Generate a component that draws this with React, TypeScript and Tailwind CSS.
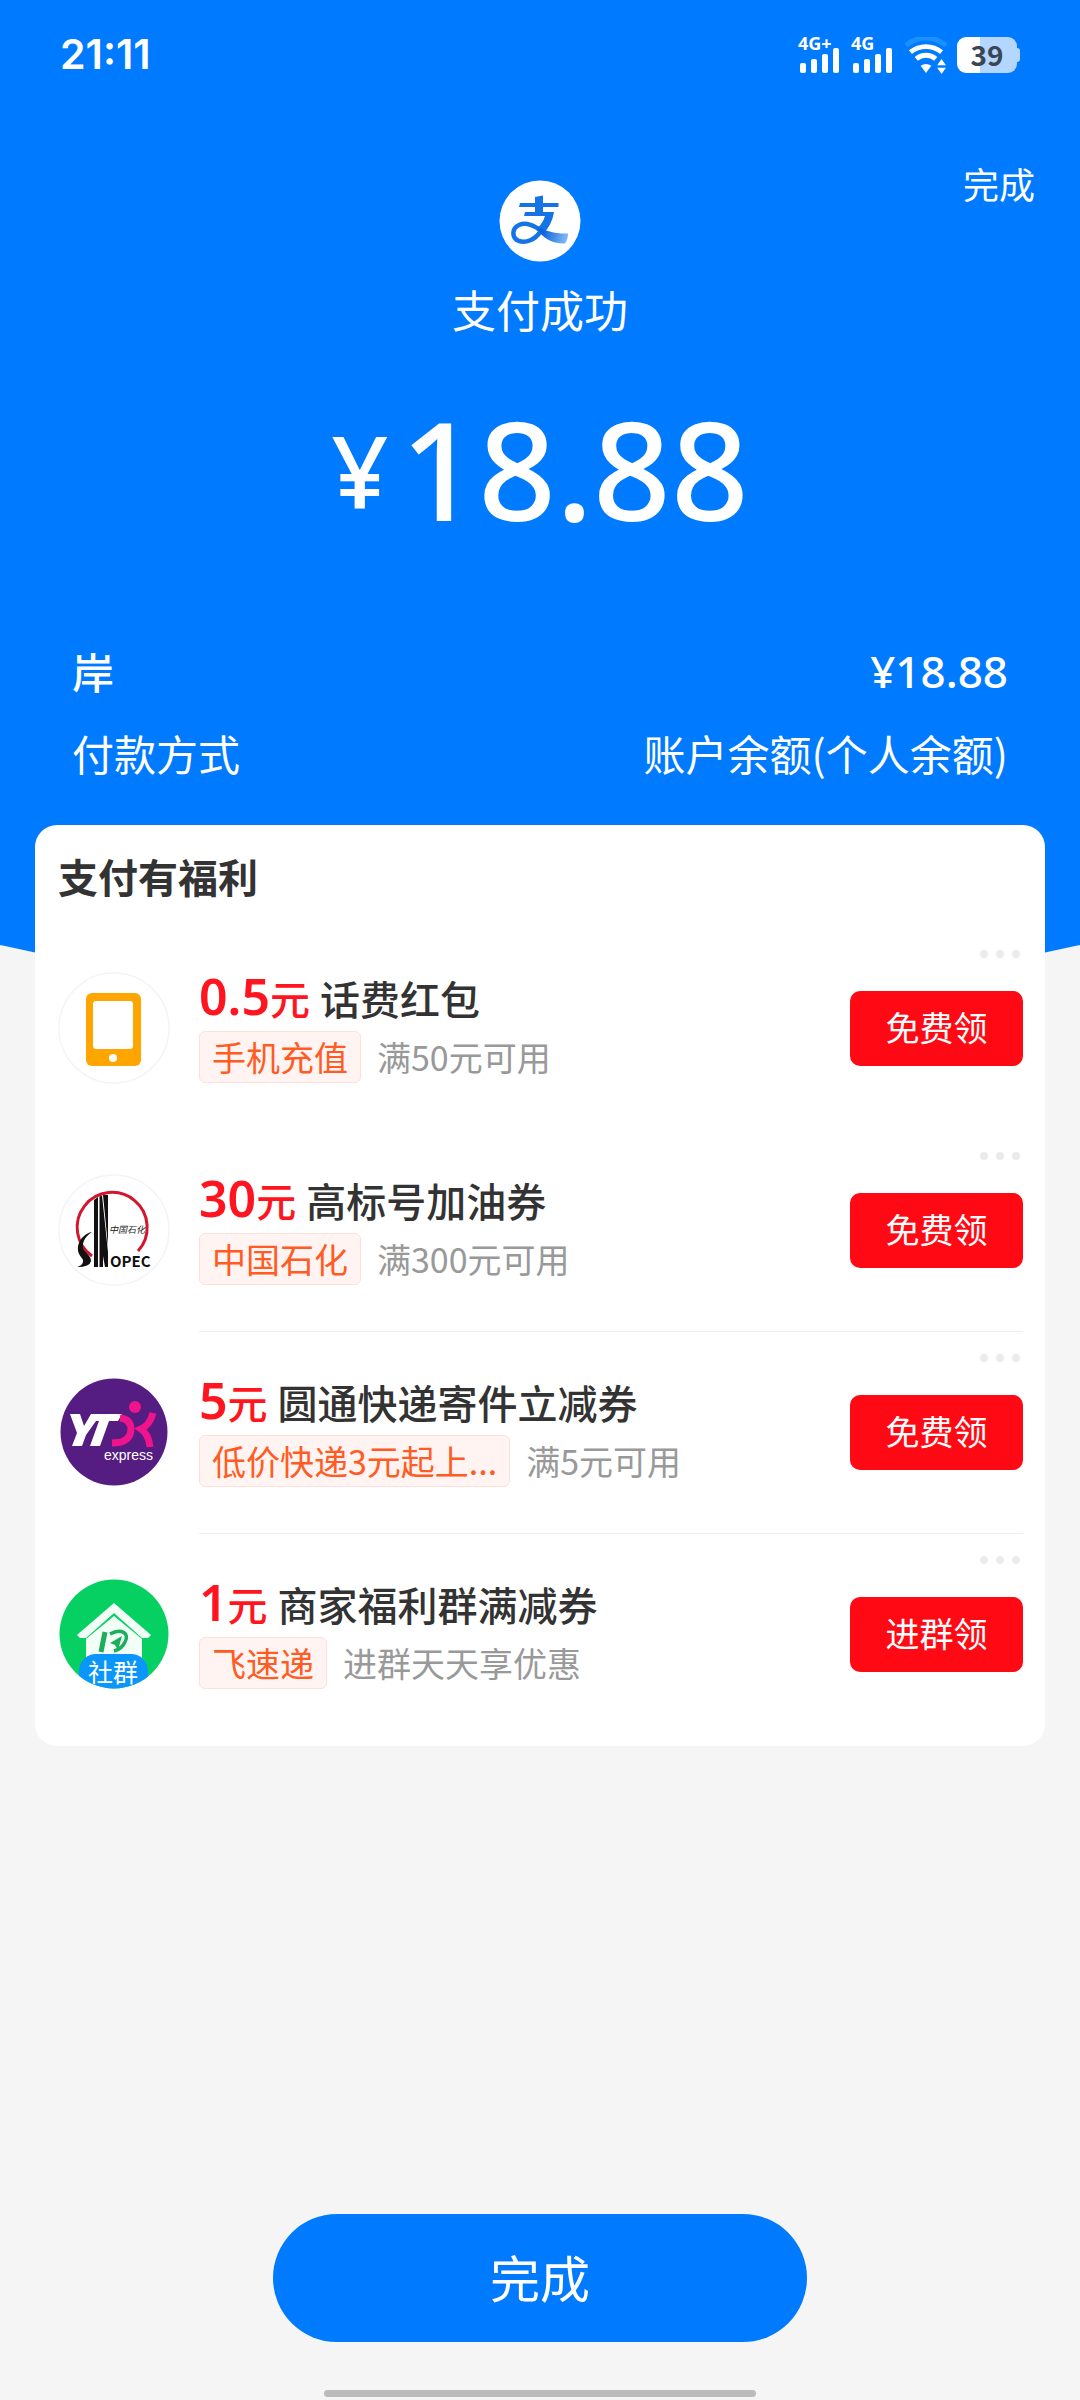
import type { ReactNode } from "react";

interface Coupon {
  id: string;
  amount: string;
  title: string;
  tag: string;
  condition: string;
  action: string;
  logo: ReactNode;
  divided: boolean;
}

function SignalIcon({ label }: { label: string }) {
  return (
    <svg width="43" height="52" viewBox="0 -8 43 52" fill="white" aria-label={label}>
      <text
        x="0"
        y="13"
        fontSize="18"
        fontWeight="700"
        fontFamily="'Noto Sans', sans-serif">
        {label}
      </text>
      <rect x="2" y="26" width="6" height="10" rx="2" />
      <rect x="13" y="22" width="6" height="14" rx="2" />
      <rect x="24" y="17" width="6" height="19" rx="2" />
      <rect x="35" y="11" width="6" height="25" rx="2" />
    </svg>
  );
}

function WifiIcon() {
  return (
    <svg width="43" height="37" viewBox="0 0 44 38" fill="none" aria-label="WLAN">
      <path d="M2 8.500C14 -1.500 31 -1.500 43 8.500" stroke="#1a91ff" strokeWidth="5" />
      <path d="M6.500 15.500C16 8 29 8 38.500 15.500" stroke="white" strokeWidth="5" />
      <path d="M12.500 22.500C18.500 17.500 26.500 17.500 32.500 22.500" stroke="white" strokeWidth="5" />
      <path d="M17 29.500Q22.500 26 28 29.500L22.500 37Z" fill="white" />
      <path d="M34 29L38.500 22.500L43 29ZM34 31.500H43L38.500 38Z" fill="white" />
    </svg>
  );
}

function BatteryIcon() {
  return (
    <div className="flex items-center">
      <div className="h-[36px] w-[60px] rounded-[9px] bg-linear-to-r from-white from-38% to-[#b5d6ff] to-38% text-center text-[28px] leading-[34px] font-bold text-[#3a4654]">
        39
      </div>
      <div className="h-[14px] w-[3px] rounded-r-full bg-[#b5d6ff]" />
    </div>
  );
}

function AlipayLogo() {
  return (
    <svg width="82" height="82" viewBox="0 0 82 82" fill="none" aria-label="支付宝">
      <defs>
        <linearGradient id="tail" x1="44" y1="52" x2="70" y2="60" gradientUnits="userSpaceOnUse">
          <stop stopColor="#0a63dc" />
          <stop offset="1" stopColor="#8fc0f8" />
        </linearGradient>
      </defs>
      <circle cx="41" cy="41" r="40.500" fill="white" />
      <path d="M36 17L44 15.500V34H36Z" fill="#1673e6" />
      <path d="M21 23H59.500V27H20Z" fill="#1673e6" />
      <path d="M26 32H55Q53 45 44 54L37 50Q44 43 46 36H25Z" fill="#1673e6" />
      <path
        d="M41 52C36 60 27 63 20 61C12 58 13 48 20 45C29 41 38 48 45 52"
        stroke="#1673e6"
        strokeWidth="4.500"
      />
      <path d="M38 46C46 51 57 54 69 53.500C69 58 68 61 66 63.500C56 64 47 60 41 53Z" fill="url(#tail)" />
    </svg>
  );
}

function PhoneLogo() {
  return (
    <svg width="112" height="112" viewBox="0 0 112 112" aria-hidden="true">
      <circle cx="56" cy="56" r="55" fill="white" stroke="#f4f4f4" strokeWidth="1.500" />
      <rect x="28" y="21" width="55" height="73" rx="6" fill="#ffa500" />
      <rect x="35" y="29" width="40" height="48" rx="3" fill="white" />
      <circle cx="55" cy="86" r="4" fill="white" />
    </svg>
  );
}

function SinopecLogo() {
  return (
    <svg width="112" height="112" viewBox="0 0 112 112" aria-hidden="true">
      <circle cx="56" cy="56" r="55" fill="white" stroke="#f4f4f4" strokeWidth="1.500" />
      <path d="M34 82A35 35 0 1 1 80 77" fill="none" stroke="#d3152e" strokeWidth="3" />
      <path d="M36 26L40 23V93H36Z" fill="#111" />
      <path d="M41.500 22.500L44 21.500L50 78V93H47L45 82V93H41.500Z" fill="#111" />
      <path d="M45 21H50V72Z" fill="#111" />
      <path
        d="M34 58C26 63 23 71 26 76C29 80 33 82 33 87Q32 93 19 93Q26 91 25 86C23 82 19 80 20 72C22 64 28 59 34 58Z"
        fill="#111"
      />
      <text x="51" y="59" fontSize="9" fontStyle="italic" fill="#222" fontFamily="'Noto Sans CJK SC', sans-serif">
        中国石化
      </text>
      <text
        x="52"
        y="93"
        fontSize="15"
        fontWeight="700"
        fill="#111"
        fontFamily="'Noto Sans CJK SC', sans-serif">
        OPEC
      </text>
    </svg>
  );
}

function YtoLogo() {
  return (
    <svg width="112" height="112" viewBox="0 0 112 112" aria-hidden="true">
      <circle cx="56" cy="56" r="53.500" fill="#551c82" />
      <path
        d="M12 38H22L26 50L33 38H64L60 45H51L42 70H32L41 45H38L28 59L24 70H14L19 57Z"
        fill="white"
      />
      <circle cx="77" cy="31" r="6" fill="#f0148c" />
      <path d="M62 42Q73 43 73 54Q72 67 54 67" fill="none" stroke="#f0148c" strokeWidth="7" />
      <path d="M95 37Q92 49 83 53Q91 59 92 71" fill="none" stroke="#f0148c" strokeWidth="7" />
      <text x="46" y="84" fontSize="14" fill="white" fontFamily="'Liberation Sans', sans-serif">
        express
      </text>
    </svg>
  );
}

function CommunityLogo() {
  return (
    <svg width="112" height="112" viewBox="0 0 112 112" aria-hidden="true">
      <defs>
        <clipPath id="round">
          <circle cx="56" cy="56" r="54.500" />
        </clipPath>
      </defs>
      <g clipPath="url(#round)">
        <rect width="112" height="112" fill="#07d062" />
        <path d="M56 25L93 57L90 60H84L56 35L28 60H22L19 57Z" fill="#f2fff6" />
        <path d="M56 38L84 61V90H28V61Z" fill="#f2fff6" />
        <path d="M47 54L43 74" stroke="#1cae5d" strokeWidth="5" />
        <path d="M52 56C63 50 72 55 67 64Q64 71 56 73" fill="none" stroke="#1cae5d" strokeWidth="3.500" />
        <path d="M52 65L64 58L60 72L57 67Z" fill="#1cae5d" />
        <rect x="21" y="76" width="69" height="46" rx="17" fill="#0a96fa" />
        <text
          x="55"
          y="104"
          fontSize="25"
          textAnchor="middle"
          fill="white"
          fontFamily="'Noto Sans CJK SC', sans-serif">
          社群
        </text>
      </g>
    </svg>
  );
}

const coupons: Coupon[] = [
  {
    id: "phone",
    amount: "0.5",
    title: "话费红包",
    tag: "手机充值",
    condition: "满50元可用",
    action: "免费领",
    logo: <PhoneLogo />,
    divided: false,
  },
  {
    id: "sinopec",
    amount: "30",
    title: "高标号加油券",
    tag: "中国石化",
    condition: "满300元可用",
    action: "免费领",
    logo: <SinopecLogo />,
    divided: false,
  },
  {
    id: "yto",
    amount: "5",
    title: "圆通快递寄件立减券",
    tag: "低价快递3元起上...",
    condition: "满5元可用",
    action: "免费领",
    logo: <YtoLogo />,
    divided: true,
  },
  {
    id: "community",
    amount: "1",
    title: "商家福利群满减券",
    tag: "飞速递",
    condition: "进群天天享优惠",
    action: "进群领",
    logo: <CommunityLogo />,
    divided: true,
  },
];

function CouponRow({ coupon }: { coupon: Coupon }) {
  return (
    <li className="flex h-[202px] items-stretch gap-[29px]">
      <div className="flex shrink-0 items-center">{coupon.logo}</div>
      <div
        className={`flex min-w-0 flex-1 items-center justify-between border-t ${
          coupon.divided ? "border-[#eee]" : "border-transparent"
        }`}>
        <div className="min-w-0 pb-2">
          <h3 className="flex items-baseline whitespace-nowrap text-[40px] leading-[58px] font-medium text-[#333]">
            <span className="text-[#ff1420]">
              <span className="font-['Noto_Sans',sans-serif] text-[50px] font-semibold">
                {coupon.amount}
              </span>
              元
            </span>
            <span className="ml-[10px]">{coupon.title}</span>
          </h3>
          <div className="mt-1 flex items-center gap-4 whitespace-nowrap text-[34px] leading-[50px]">
            <span className="rounded-md border border-[#fde0d8] bg-[#fff4f2] px-3 text-[#ff5b22]">
              {coupon.tag}
            </span>
            <span className="text-[#999]">{coupon.condition}</span>
          </div>
        </div>
        <div className="relative flex h-full shrink-0 items-center">
          <button
            type="button"
            aria-label="更多"
            className="absolute top-[18px] right-0 flex gap-2 px-[3px] py-1">
            <span className="size-2 rounded-full bg-[#ebebeb]" />
            <span className="size-2 rounded-full bg-[#ebebeb]" />
            <span className="size-2 rounded-full bg-[#ebebeb]" />
          </button>
          <button
            type="button"
            className="h-[75px] w-[173px] rounded-[10px] bg-[#ff0a14] pb-1 text-[34px] text-white">
            {coupon.action}
          </button>
        </div>
      </div>
    </li>
  );
}

export default function App() {
  return (
    <div className="relative flex min-h-screen flex-col bg-[#f5f5f5] font-['Noto_Sans_CJK_SC',sans-serif]">
      {/* Curved blue backdrop */}
      <div className="absolute inset-x-0 top-0 h-[1004px] bg-[#007aff] [clip-path:ellipse(148%_100%_at_50%_0)]" />

      <div className="relative flex flex-1 flex-col">
        {/* Status bar */}
        <div className="flex h-[110px] items-center justify-between px-[60px] text-white">
          <span className="font-[Inter,sans-serif] text-[41px] font-semibold">21:11</span>
          <div className="flex items-center gap-[10px]">
            <SignalIcon label="4G+" />
            <SignalIcon label="4G" />
            <WifiIcon />
            <BatteryIcon />
          </div>
        </div>

        <header className="relative flex flex-col items-center pt-[70px] text-white">
          <button
            type="button"
            className="absolute top-[48px] right-[45px] text-[36px] leading-[50px]">
            完成
          </button>
          <AlipayLogo />
          <h1 className="mt-[15px] text-[44px] leading-[64px]">支付成功</h1>
          <p className="mt-[28px] flex items-center font-['Noto_Sans',sans-serif] leading-[200px] font-medium">
            <span className="mr-3 text-[100px]">¥</span>
            <span className="text-[136px]">18.88</span>
          </p>
        </header>

        <dl className="mt-[61px] px-[72px] text-[42px] leading-[82px] text-white">
          <div className="flex justify-between font-medium">
            <dt>岸</dt>
            <dd className="font-['Noto_Sans',sans-serif] text-[44px]">¥18.88</dd>
          </div>
          <div className="flex justify-between">
            <dt>付款方式</dt>
            <dd>账户余额(个人余额)</dd>
          </div>
        </dl>

        <section className="mx-[35px] mt-[31px] rounded-[22px] bg-white pr-[22px] pb-[11px] pl-[23px]">
          <h2 className="text-[40px] leading-[102px] font-bold text-[#333]">支付有福利</h2>
          <ul>
            {coupons.map((coupon) => (
              <CouponRow key={coupon.id} coupon={coupon} />
            ))}
          </ul>
        </section>

        <footer className="mt-auto flex flex-col items-center pt-[60px]">
          <button
            type="button"
            className="h-[128px] w-[534px] rounded-full bg-[#007aff] pb-1 text-[50px] text-white">
            完成
          </button>
          <div className="mt-[48px] mb-[3px] h-[7px] w-[432px] rounded-full bg-[#bbb]" />
        </footer>
      </div>
    </div>
  );
}
